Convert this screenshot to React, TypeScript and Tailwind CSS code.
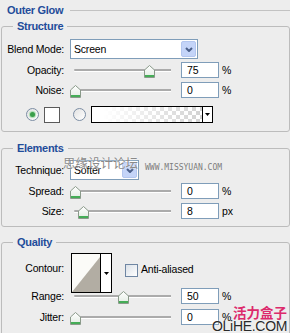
import React from "react";

const heading = "font-bold text-[#1f4c9a] text-[11px] tracking-[-0.3px]";

function Thumb() {
  return (
    <svg width="11" height="13" viewBox="0 0 11 13">
      <defs>
        <linearGradient id="thumb-fill" x1="0" y1="0" x2="0" y2="1">
          <stop offset="0" stopColor="#ffffff" />
          <stop offset="1" stopColor="#e2ebe2" />
        </linearGradient>
      </defs>
      <path d="M5.5 0.5 L10.5 5 V12.5 H0.5 V5 Z" fill="url(#thumb-fill)" stroke="#8a9a8a" />
      <rect x="1" y="10" width="9" height="2" fill="#45ad57" />
    </svg>
  );
}

function Slider({ at }: { at: number }) {
  return (
    <div className="relative w-[111px] h-[16px] shrink-0">
      <div className="absolute left-[4px] top-[7px] w-[97px] h-[2px] rounded-l-full bg-[#ababab] shadow-[0_1px_0_#ffffff]" />
      <div className="absolute top-[3px] leading-none" style={{ left: at - 70 - 5.5 }}>
        <Thumb />
      </div>
    </div>
  );
}

function Field({ value }: { value: string }) {
  return (
    <div className="w-[38px] h-[16px] shrink-0 border border-[#7f9db9] bg-white pl-[5px] leading-[14px]">
      {value}
    </div>
  );
}

function Chevron() {
  return (
    <svg width="8" height="5" viewBox="0 0 8 5">
      <path d="M1 1 L4 4 L7 1" fill="none" stroke="#4a5f8a" strokeWidth="2" />
    </svg>
  );
}

function Select({ width, text }: { width: string; text: string }) {
  return (
    <div className={`flex items-center h-[20px] border border-[#7f9db9] bg-white ${width}`}>
      <span className="flex-1 pl-[3px]">{text}</span>
      <div className="w-[15px] h-[16px] mr-[1px] rounded-[2px] border border-[#b3c6ef] bg-[#c4d4f8] flex items-center justify-center">
        <Chevron />
      </div>
    </div>
  );
}

function Label({ children }: { children: React.ReactNode }) {
  return <span className="inline-block w-[62px] shrink-0 text-right whitespace-nowrap">{children}</span>;
}

function SliderRow({
  label,
  at,
  value,
  unit,
  className = "",
}: {
  label: string;
  at: number;
  value: string;
  unit: string;
  className?: string;
}) {
  return (
    <div className={`flex items-center h-[16px] ${className}`}>
      <Label>{label}</Label>
      <div className="ml-[6px] flex items-center">
        <Slider at={at} />
        <Field value={value} />
        <span className="ml-[3px]">{unit}</span>
      </div>
    </div>
  );
}

function Radio({ checked }: { checked?: boolean }) {
  return (
    <div className="w-[13px] h-[13px] shrink-0 rounded-full border border-[#7c8ea4] bg-linear-to-br from-[#e2e2e2] to-white flex items-center justify-center">
      {checked && <div className="w-[5px] h-[5px] rounded-full bg-[#3a9e4a] shadow-[0_0_1px_1px_#a8dcae]" />}
    </div>
  );
}

function DownTri() {
  return (
    <svg width="5" height="3" viewBox="0 0 5 3">
      <path d="M0 0 H5 L2.5 3 Z" fill="#000" />
    </svg>
  );
}

function Group({
  title,
  className = "",
  children,
}: {
  title: string;
  className?: string;
  children: React.ReactNode;
}) {
  return (
    <fieldset className={`ml-[1px] w-[289px] border border-[#bcbcbc] rounded-[3px] ${className}`}>
      <legend className={`ml-[11px] px-[4px] leading-[12px] ${heading}`}>{title}</legend>
      {children}
    </fieldset>
  );
}

export default function App() {
  return (
    <div className="relative w-[290px] h-[333px] overflow-hidden bg-[#ededed] text-[10.5px] tracking-[-0.2px] leading-[13px] text-black font-['Liberation_Sans',Arial,sans-serif]">
      <div className="flex items-center h-[20px] pl-[7px]">
        <span className={heading}>Outer Glow</span>
        <div className="flex-1 h-px ml-[7px] bg-[#c2c2c2]" />
      </div>

      <Group title="Structure" className="pt-[7px] pb-[8px]">
        <div className="flex items-center h-[20px]">
          <Label>Blend Mode:</Label>
          <div className="ml-[6px]">
            <Select width="w-[128px]" text="Screen" />
          </div>
        </div>
        <SliderRow label="Opacity:" at={149} value="75" unit="%" className="mt-[3px]" />
        <SliderRow label="Noise:" at={75} value="0" unit="%" className="mt-[4px]" />
        <div className="flex items-center h-[17px] mt-[8px] pl-[24px]">
          <Radio checked />
          <div className="ml-[5px] w-[16px] h-[16px] border border-[#5a5a5a] bg-white" />
          <div className="ml-[13px]">
            <Radio />
          </div>
          <div className="ml-[5px] flex w-[122px] h-[17px] border border-black">
            <div className="flex-1 bg-[image:conic-gradient(#d2d2d2_25%,#ffffff_0_50%,#d2d2d2_0_75%,#ffffff_0)] bg-[length:8px_8px]">
              <div className="w-full h-full bg-linear-to-r from-white from-10% to-transparent" />
            </div>
            <div className="w-[10px] border-l border-black bg-white flex items-center justify-center">
              <DownTri />
            </div>
          </div>
        </div>
      </Group>

      <Group title="Elements" className="mt-[10px] pt-[6px] pb-[7px]">
        <div className="flex items-center h-[20px]">
          <Label>Technique:</Label>
          <div className="ml-[6px]">
            <Select width="w-[69px]" text="Softer" />
          </div>
        </div>
        <SliderRow label="Spread:" at={75} value="0" unit="%" className="mt-[3px]" />
        <SliderRow label="Size:" at={83} value="8" unit="px" className="mt-[4px]" />
      </Group>

      <Group title="Quality" className="mt-[9px] pt-[5px] pb-[10px]">
        <div className="flex items-start h-[40px]">
          <div className="mt-[9px] flex">
            <Label>Contour:</Label>
          </div>
          <div className="ml-[7px] flex w-[41px] h-[40px] border border-black bg-white">
            <svg width="28" height="38" viewBox="0 0 28 38" className="block">
              <rect width="28" height="38" fill="#fbfbf8" />
              <path d="M0 38 L28 3 V38 Z" fill="#b2ada3" />
            </svg>
            <div className="flex-1 border-l border-black flex items-center justify-center">
              <DownTri />
            </div>
          </div>
          <div className="ml-[13px] mt-[11px] w-[13px] h-[13px] border border-[#6f86a3] bg-linear-to-br from-[#dbe1e8] to-white" />
          <span className="ml-[3px] mt-[10px]">Anti-aliased</span>
        </div>
        <SliderRow label="Range:" at={123} value="50" unit="%" className="-mt-[5px]" />
        <SliderRow label="Jitter:" at={75} value="0" unit="%" className="mt-[5px]" />
      </Group>

      <span className="absolute left-[63px] top-[156px] text-[12.5px] leading-[13px] tracking-normal text-[#8a8a8a] font-['Noto_Sans_CJK_SC',sans-serif] [text-shadow:0_0_2px_#ffffff]">
        思缘设计论坛
      </span>
      <span className="absolute left-[145px] top-[164px] text-[8px] leading-[8px] tracking-normal text-[#7c7c7c] font-['DejaVu_Sans_Mono',monospace]">
        WWW.MISSYUAN.COM
      </span>
      <span className="absolute left-[233px] top-[306px] text-[13.5px] leading-[13px] tracking-normal font-bold text-[#dc2a6c] font-['Noto_Sans_CJK_SC',sans-serif]">
        活力盒子
      </span>
      <span className="absolute left-[212px] top-[321px] text-[14px] leading-[11px] tracking-[-0.3px] text-[#2a2a2a] font-['Liberation_Sans',Arial,sans-serif] [text-shadow:0_0_2px_#ffffff]">
        OLiHE.COM
      </span>
    </div>
  );
}
